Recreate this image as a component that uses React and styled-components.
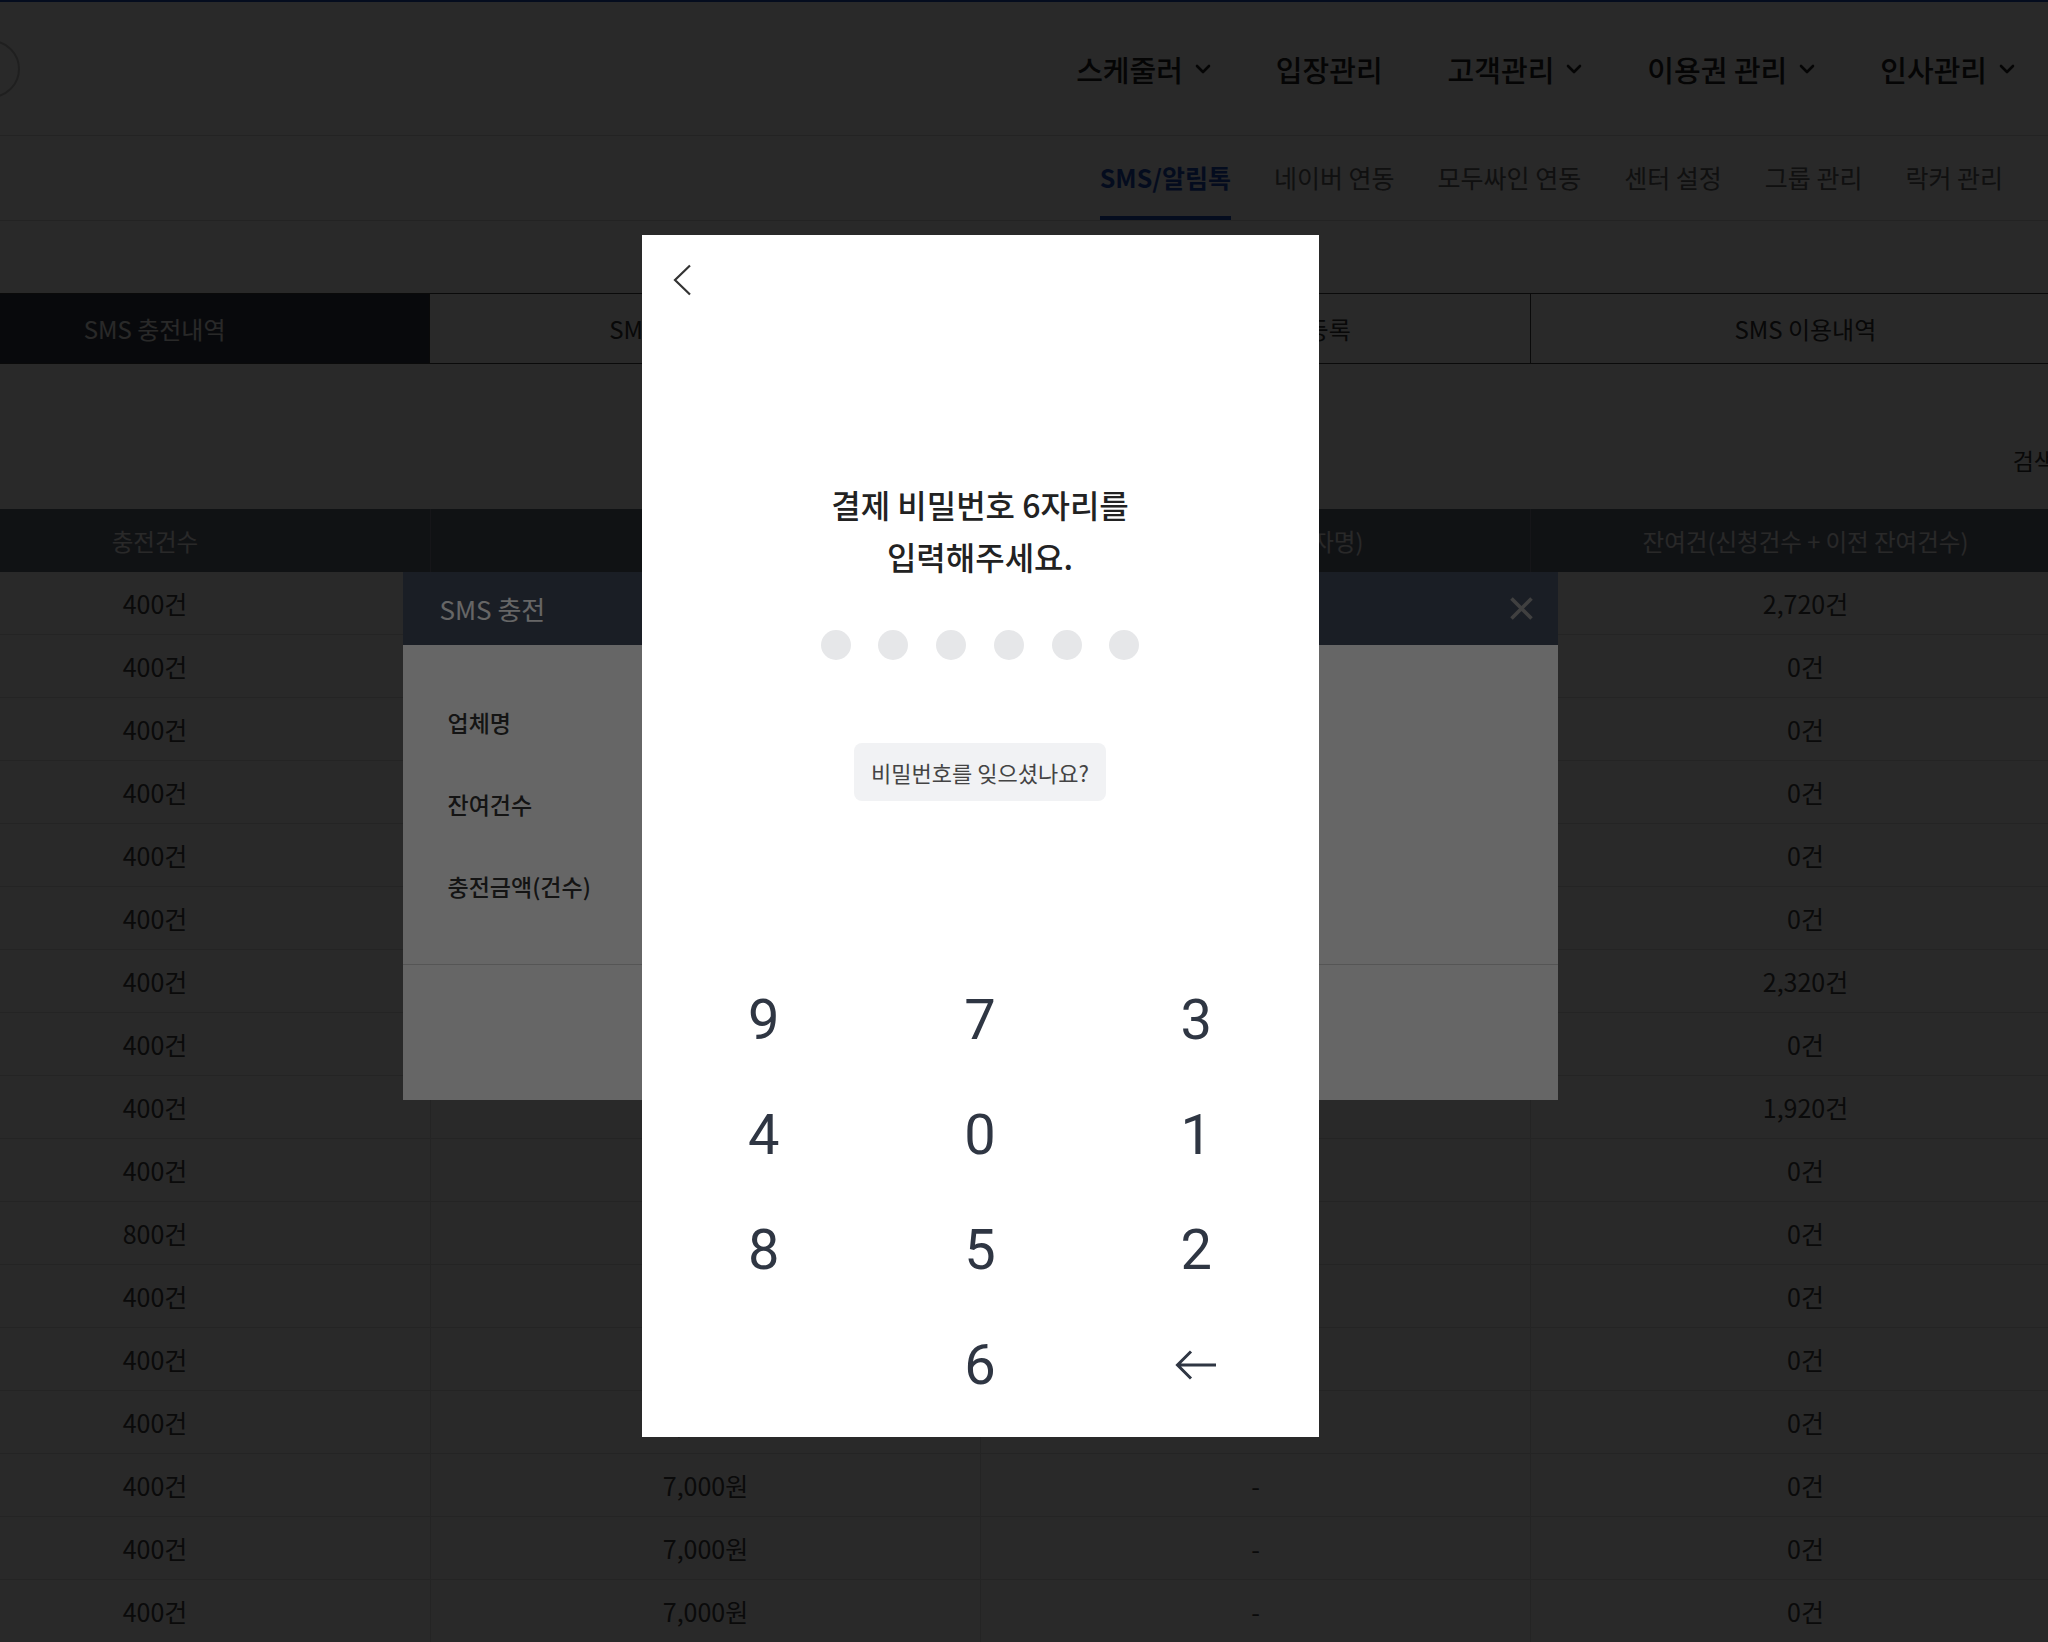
import React from 'react';
import styled, { createGlobalStyle } from 'styled-components';

const GlobalStyle = createGlobalStyle`
  html, body {
    margin: 0;
    padding: 0;
    height: 100%;
    overflow: hidden;
    background: #fff;
  }
  body {
    font-family: "Noto Sans CJK KR", "Noto Sans", sans-serif;
    color: #333;
  }
  * {
    box-sizing: border-box;
  }
`;

// the page is wider than the window and scrolled 120px to the right
const Page = styled.div`
  position: relative;
  width: 2200px;
  min-height: 1672px;
  margin-left: -120px;
  background: #fff;
`;

const TopHeader = styled.header`
  height: 136px;
  border-top: 2px solid #1e4fc0;
  border-bottom: 1px solid #dcdcdc;
  display: flex;
  align-items: center;
  justify-content: space-between;
  padding: 0 65px 0 82px;
`;

const Logo = styled.div`
  width: 58px;
  height: 58px;
  border-radius: 50%;
  border: 2px solid #c4c4c4;
`;

const MainNav = styled.nav`
  display: flex;
  align-items: center;
  gap: 65px;
`;

const NavItem = styled.a`
  display: flex;
  align-items: center;
  gap: 12px;
  font-size: 29px;
  font-weight: 500;
  color: #222;
  cursor: pointer;
`;

const SubNav = styled.nav`
  height: 85px;
  border-bottom: 1px solid #dcdcdc;
  display: flex;
  justify-content: flex-end;
  gap: 43px;
  padding-right: 77px;
`;

const SubItem = styled.a`
  display: flex;
  align-items: center;
  height: 84px;
  padding-top: 2px;
  font-size: 25px;
  font-weight: ${p => (p.$active ? 700 : 400)};
  color: ${p => (p.$active ? '#1e4fc0' : '#666')};
  border-bottom: 4px solid ${p => (p.$active ? '#1e4fc0' : 'transparent')};
  cursor: pointer;
`;

const TabBar = styled.div`
  margin-top: 72px;
  height: 71px;
  display: flex;
  border-top: 1px solid #444;
  border-bottom: 1px solid #444;
`;

const Tab = styled.div`
  flex: 1;
  display: flex;
  align-items: center;
  justify-content: center;
  font-size: 24px;
  background: ${p => (p.$active ? '#383e4b' : '#fff')};
  color: ${p => (p.$active ? '#fff' : '#333')};
  & + & {
    border-left: 1px solid #444;
  }
`;

const FilterBar = styled.div`
  height: 145px;
  display: flex;
  justify-content: flex-end;
  align-items: flex-end;
  padding: 0 25px 35px 0;
`;

const FilterLabel = styled.span`
  font-size: 23px;
  color: #333;
  line-height: 28px;
`;

const Grid = styled.div`
  display: grid;
  grid-template-columns: repeat(4, 1fr);
`;

const HeadRow = styled(Grid)`
  height: 63px;
  background: #6a7083;
`;

const HeadCell = styled.div`
  display: flex;
  align-items: center;
  justify-content: center;
  font-size: 23.5px;
  color: #fff;
  & + & {
    border-left: 1px solid #8a8f9e;
  }
`;

const Row = styled(Grid)`
  height: 63px;
  border-bottom: 1px solid #e2e2e2;
`;

const Cell = styled.div`
  display: flex;
  align-items: center;
  justify-content: center;
  font-size: 25px;
  color: #444;
  & + & {
    border-left: 1px solid #e2e2e2;
  }
`;

const Dim = styled.div`
  position: absolute;
  top: 0;
  left: 0;
  right: 0;
  height: 1672px;
  background: rgba(0, 0, 0, 0.6);
  display: flex;
  align-items: center;
  justify-content: center;
`;

/* SMS 충전 dialog (behind the PIN pad) */
const SmsModal = styled.div`
  width: 1155px;
  height: 528px;
  background: #fff;
  display: flex;
  flex-direction: column;
`;

const SmsHead = styled.div`
  height: 73px;
  background: #434b5c;
  display: flex;
  align-items: center;
  justify-content: space-between;
  padding: 0 24px 0 37px;
`;

const SmsTitle = styled.h3`
  margin: 0;
  font-size: 26px;
  font-weight: 400;
  color: #fff;
`;

const CloseBtn = styled.button`
  border: none;
  background: none;
  padding: 0;
  display: flex;
  cursor: pointer;
`;

const SmsBody = styled.div`
  padding: 36px 45px 37px;
`;

const FieldRow = styled.div`
  display: grid;
  grid-template-columns: 250px 1fr;
  align-items: center;
  height: 82px;
`;

const FieldLabel = styled.span`
  font-size: 23px;
  font-weight: 500;
  color: #333;
`;

const SmsFoot = styled.div`
  flex: 1;
  border-top: 1px solid #d5d5d5;
`;

/* payment PIN pad */
const PinModal = styled.div`
  width: 677px;
  height: 1202px;
  background: #fff;
  display: flex;
  flex-direction: column;
  align-items: center;
  padding: 0 14px 15px;
`;

const PinTop = styled.div`
  align-self: stretch;
  height: 90px;
  padding: 29px 0 0 16px;
`;

const BackBtn = styled.button`
  border: none;
  background: none;
  padding: 0;
  display: flex;
  cursor: pointer;
`;

const PinTitle = styled.h2`
  margin: 153px 0 0;
  font-size: 32px;
  line-height: 52px;
  font-weight: 500;
  color: #222;
  text-align: center;
`;

const Dots = styled.div`
  display: flex;
  gap: 27.7px;
  margin-top: 48px;
`;

const Dot = styled.span`
  width: 30px;
  height: 30px;
  border-radius: 50%;
  background: ${p => (p.$filled ? '#2f3643' : '#e6e7e9')};
`;

const ForgotBtn = styled.button`
  margin-top: 83px;
  height: 58px;
  padding: 0 17px;
  border: none;
  border-radius: 8px;
  background: #f1f2f4;
  font-family: "Noto Sans CJK KR", sans-serif;
  font-size: 22px;
  color: #444;
  cursor: pointer;
`;

const Keypad = styled.div`
  margin-top: auto;
  align-self: stretch;
  display: grid;
  grid-template-columns: repeat(3, 1fr);
  grid-auto-rows: 115px;
`;

const Key = styled.button`
  border: none;
  background: none;
  display: flex;
  align-items: center;
  justify-content: center;
  font-family: Roboto, "Liberation Sans", sans-serif;
  font-size: 56px;
  font-weight: 400;
  color: #2f3643;
  cursor: pointer;
`;

const Chevron = () => (
  <svg width="16" height="10" viewBox="0 0 16 10">
    <polyline points="2,2 8,8 14,2" fill="none" stroke="#222" strokeWidth="2.6" strokeLinecap="round" strokeLinejoin="round" />
  </svg>
);

const navItems = [
  { label: '스케줄러', menu: true },
  { label: '입장관리' },
  { label: '고객관리', menu: true },
  { label: '이용권 관리', menu: true },
  { label: '인사관리', menu: true },
];

const subItems = ['SMS/알림톡', '네이버 연동', '모두싸인 연동', '센터 설정', '그룹 관리', '락커 관리'];

const tabs = ['SMS 충전내역', 'SMS 충전 신청하기', 'SMS 발신번호 등록', 'SMS 이용내역'];

const remain = ['2,720건', '0건', '0건', '0건', '0건', '0건', '2,320건', '0건', '1,920건', '0건', '0건', '0건', '0건', '0건', '0건', '0건', '0건'];

const rows = remain.map((r, i) => ({
  count: i === 10 ? '800건' : '400건',
  price: i === 10 ? '14,000원' : '7,000원',
  who: '-',
  remain: r,
}));

const keys = ['9', '7', '3', '4', '0', '1', '8', '5', '2', '', '6', 'back'];

const App = () => {
  const pin = '';

  return (
    <>
      <GlobalStyle />
      <Page>
        <TopHeader>
          <Logo />
          <MainNav>
            {navItems.map(n => (
              <NavItem key={n.label}>
                {n.label}
                {n.menu && <Chevron />}
              </NavItem>
            ))}
          </MainNav>
        </TopHeader>

        <SubNav>
          {subItems.map((s, i) => (
            <SubItem key={s} $active={i === 0}>{s}</SubItem>
          ))}
        </SubNav>

        <TabBar>
          {tabs.map((t, i) => (
            <Tab key={t} $active={i === 0}>{t}</Tab>
          ))}
        </TabBar>

        <FilterBar>
          <FilterLabel>검색</FilterLabel>
        </FilterBar>

        <HeadRow>
          <HeadCell>충전건수</HeadCell>
          <HeadCell>충전금액</HeadCell>
          <HeadCell>충전 신청자(담당자명)</HeadCell>
          <HeadCell>잔여건(신청건수 + 이전 잔여건수)</HeadCell>
        </HeadRow>
        {rows.map((r, i) => (
          <Row key={i}>
            <Cell>{r.count}</Cell>
            <Cell>{r.price}</Cell>
            <Cell>{r.who}</Cell>
            <Cell>{r.remain}</Cell>
          </Row>
        ))}

        <Dim>
          <SmsModal>
            <SmsHead>
              <SmsTitle>SMS 충전</SmsTitle>
              <CloseBtn type="button">
                <svg width="25" height="25" viewBox="0 0 25 25">
                  <path d="M2.5 2.5 L22.5 22.5 M22.5 2.5 L2.5 22.5" stroke="#a0a0a0" strokeWidth="3.6" />
                </svg>
              </CloseBtn>
            </SmsHead>
            <SmsBody>
              <FieldRow>
                <FieldLabel>업체명</FieldLabel>
              </FieldRow>
              <FieldRow>
                <FieldLabel>잔여건수</FieldLabel>
              </FieldRow>
              <FieldRow>
                <FieldLabel>충전금액(건수)</FieldLabel>
              </FieldRow>
            </SmsBody>
            <SmsFoot />
          </SmsModal>
        </Dim>

        <Dim>
          <PinModal>
            <PinTop>
              <BackBtn type="button">
                <svg width="20" height="32" viewBox="0 0 20 32">
                  <polyline points="18,1.5 3,16 18,30.5" fill="none" stroke="#333" strokeWidth="2.2" />
                </svg>
              </BackBtn>
            </PinTop>
            <PinTitle>
              결제 비밀번호 6자리를
              <br />
              입력해주세요.
            </PinTitle>
            <Dots>
              {[0, 1, 2, 3, 4, 5].map(i => (
                <Dot key={i} $filled={i < pin.length} />
              ))}
            </Dots>
            <ForgotBtn type="button">비밀번호를 잊으셨나요?</ForgotBtn>
            <Keypad>
              {keys.map((k, i) => (
                <Key key={i} type="button">
                  {k === 'back' ? (
                    <svg width="42" height="32" viewBox="0 0 42 32">
                      <path d="M41 16 H3 M16 2.5 L2.5 16 L16 29.5" fill="none" stroke="#2f3643" strokeWidth="3" />
                    </svg>
                  ) : (
                    k
                  )}
                </Key>
              ))}
            </Keypad>
          </PinModal>
        </Dim>
      </Page>
    </>
  );
};

export default App;
